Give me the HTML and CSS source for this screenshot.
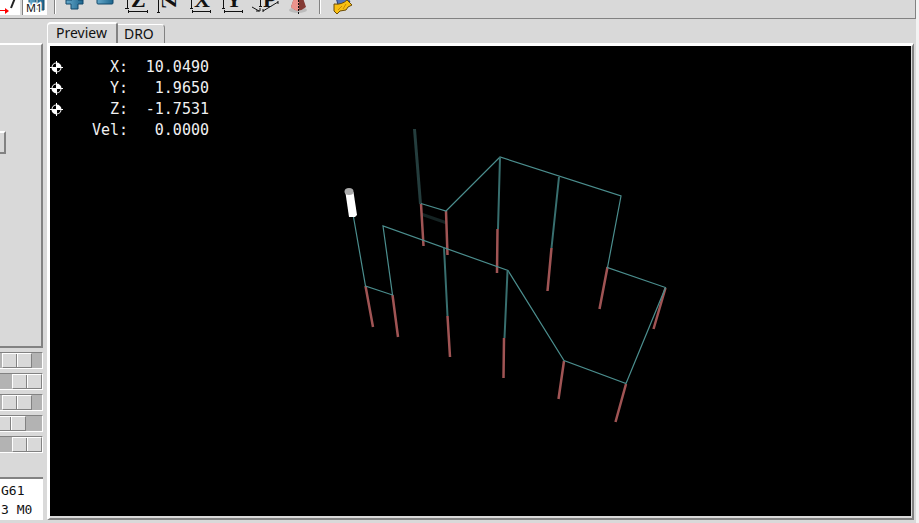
FILE: index.html
```html
<!DOCTYPE html>
<html lang="en">
<head>
<meta charset="utf-8">
<title>Preview</title>
<link rel="stylesheet" href="styles.css">
</head>
<body>
<div class="app">
  <div class="toolbar">
    <button class="tool toggle first" aria-label="Skip"><svg width="20" height="15"><path d="M0 10.500h6" stroke="#f00"/><path d="M5 8l4 3-4 3z" fill="#f00"/><path d="M15-2l-4 10" stroke="#222" stroke-width="2"/></svg></button>
    <button class="tool toggle" aria-label="Optional pause"><svg width="24" height="15"><defs><linearGradient id="b"><stop stop-color="#66a9cb"/><stop offset="1" stop-color="#1d658d"/></linearGradient></defs><path d="M6-3h7v13H6zM15-3h6v13h-6z" fill="url(#b)" stroke="#16506f"/><text x="3" y="12" class="m1">M1</text></svg></button>
    <span class="sep"></span>
    <button class="tool" aria-label="Zoom in"><svg width="31" height="18"><path d="M12-4h6v4h5v4h-5v5h-7V4H6V0h6z" transform="translate(2)" fill="url(#b)" stroke="#12496a"/></svg></button>
    <button class="tool" aria-label="Zoom out"><svg width="31" height="18"><rect x="8" y="-3" width="16" height="7" rx="1" fill="url(#b)" stroke="#12496a"/></svg></button>
    <button class="tool" aria-label="Z view"><svg width="31" height="18"><path class="axis" d="M7.500-2V8M5 8.500h4M8 11.500h19M8.500 10v3M27.500 10v3"/><text x="11" y="7" class="letter">Z</text></svg></button>
    <button class="tool" aria-label="Rotated Z view"><svg width="32" height="18"><path class="axis" d="M7.500-2v14M6 12.500h3"/><text x="11" y="-6" class="letter" transform="rotate(90 11 -6)">Z</text></svg></button>
    <button class="tool" aria-label="X view"><svg width="32" height="18"><path class="axis" d="M8.500-2V8M7 8.500h3M9 11.500h19M9.500 10v3M27.500 10v3"/><text x="11" y="7" class="letter">X</text></svg></button>
    <button class="tool" aria-label="Y view"><svg width="32" height="18"><path class="axis" d="M8.500-2V8M7 8.500h3M9 11.500h19M9.500 10v3M27.500 10v3"/><text x="11" y="7" class="letter">Y</text></svg></button>
    <button class="tool" aria-label="Perspective view"><svg width="32" height="18"><path class="axis" d="M13.500-2V6M12 6.500h3M5 7l7 4M13 8v3H9M16 11l15-9M16 9v3M31 1v3"/><text x="16" y="7" class="letter">P</text></svg></button>
    <button class="tool" aria-label="Rotate"><svg width="36" height="18"><ellipse cx="19" cy="10" rx="9" ry="3" fill="#bbb"/><path d="M16-5l-4 12q7 7 15 0L23-5z" fill="#843a34"/><path d="M16-5l-4 12q4 4 8 4V-5z" fill="#eb938c"/><path d="M19.500-3v17" stroke="#111" stroke-dasharray="2 1"/></svg></button>
    <span class="sep wide"></span>
    <button class="tool" aria-label="Clear plot"><svg width="32" height="18"><path d="M11-3h11l3 5-12 3z" fill="#5375bd" stroke="#273b73"/><path d="M9 4q8 1 13-4l5 5-4 2-2 3-6 1-3 3-3-3z" fill="#f8bf13" stroke="#6b4b05"/><path d="M13 10l4-4M18 9l3-5" stroke="#c68a08"/></svg></button>
  </div>

  <div class="main">
    <aside class="side">
      <div class="panel"><button class="stub" aria-label="Action"></button></div>
      <div class="sliders">
        <input type="range" aria-label="Feed override" min="0" max="68" value="58">
        <input type="range" aria-label="Rapid override" min="0" max="68" value="68">
        <input type="range" aria-label="Spindle override" min="0" max="68" value="58">
        <input type="range" aria-label="Jog speed" min="0" max="68" value="52">
        <input type="range" aria-label="Max velocity" min="0" max="68" value="68">
      </div>
      <textarea class="codes" aria-label="Active codes" readonly>G61
3 M0</textarea>
    </aside>

    <section class="notebook">
      <div class="tabs" role="tablist">
        <button class="tab active" role="tab" aria-selected="true">Preview</button>
        <button class="tab" role="tab" aria-selected="false">DRO</button>
      </div>
      <div class="page">
        <svg class="plot" viewBox="50 46 861 470" preserveAspectRatio="xMidYMid meet">
          <path class="faint" d="M414.500 129L420.500 204"/>
          <path class="shadow" d="M421 214L447 223"/>
          <g class="feed">
            <path d="M365.500 286L373 327M392.500 295L398 337M421 204L423.500 246M446 211L447.500 255M447.500 316L450 357M504 338L503.500 378M497.500 229L497 273M551.500 248L547.500 291M607.500 267L599.500 309M665.500 288L653.500 329M564 361L558.500 399M626 384L615.500 422"/>
          </g>
          <g class="rapid">
            <path d="M353.500 217L365.500 286L392.500 295L383 226L508 270.500L564 360.500L626 383.500L665.500 287.500L607.500 267.500L621 196L500 157L446 211L421 203.500"/>
            <path class="drop" d="M444 247.500L447.500 316M507.500 271L504.500 338M500 157L498 229M559 177L551.500 248"/>
          </g>
          <path d="M345.500 193L349 217H355L357 215L353.500 192z" fill="#fff"/>
          <ellipse cx="349" cy="191.500" rx="4.500" ry="3.500" fill="#aaa"/>
        </svg>
        <svg class="defs" width="0" height="0"><defs><symbol id="home" viewBox="0 0 13 13"><circle cx="6.500" cy="6.500" r="5" fill="#fff"/><path d="M6 6V2.500A4 4 0 0 0 2.500 6zM7 7v3.500A4 4 0 0 0 10.500 7z" fill="#000"/><path d="M6.500 0v13M0 6.500h13" stroke="#fff"/></symbol></defs></svg>
        <div class="readout">
          <svg class="home"><use href="#home"/></svg><span>X:</span><span>10.0490</span>
          <svg class="home"><use href="#home"/></svg><span>Y:</span><span>1.9650</span>
          <svg class="home"><use href="#home"/></svg><span>Z:</span><span>-1.7531</span>
          <i></i><span>Vel:</span><span>0.0000</span>
        </div>
      </div>
    </section>
  </div>
</div>
</body>
</html>
```
FILE: styles.css
```css
* { box-sizing: border-box; }
body {
  margin: 0;
  padding-right: 3px;
  height: 100vh;
  overflow: hidden;
  background: #f3f3f3;
  font: 14px/18px "Noto Sans", sans-serif;
  color: #111;
}
button { margin: 0; padding: 0; border: 0; background: none; font: inherit; color: inherit; }
.app { height: 100%; display: flex; flex-direction: column; background: #d9d9d9; }

.toolbar {
  flex: 0 0 19px;
  display: flex;
  align-items: flex-start;
  overflow: hidden;
  border-right: 1px solid #828282;
  border-bottom: 1px solid #828282;
}
.tool { flex: none; height: 18px; }
.tool svg { display: block; fill: none; }
.toggle { height: 15px; background: #fff; border-left: 1px solid #828282; }
.toggle.first { border-left: 0; margin-right: 2px; }
.sep { flex: none; width: 2px; height: 14px; margin: 0 2px 0 7px; border-left: 1px solid #828282; border-right: 1px solid #fff; }
.sep.wide { margin: 0 4px; }
.axis { stroke: #111; }
.letter { font: bold 22px "Liberation Serif", serif; fill: #111; }
.m1 { font: 11px "Noto Sans", sans-serif; fill: #111; stroke: #fff; stroke-width: 3px; paint-order: stroke; }

.main { flex: 1; min-height: 0; display: flex; gap: 4px; padding: 3px 2px 3px 0; }
.side { flex: 0 0 43px; display: flex; flex-direction: column; overflow: hidden; padding-top: 21px; }
.panel {
  flex: 1;
  padding-top: 86px;
  border-top: 2px solid #fff;
  border-right: 2px solid #828282;
  border-bottom: 2px solid #828282;
}
.stub {
  display: block;
  width: 6px;
  height: 23px;
  border: solid #828282;
  border-width: 2px 2px 2px 0;
  border-top-color: #fff;
}
.sliders { display: flex; flex-direction: column; align-items: flex-end; gap: 4px; padding: 4px 0 24px; }
.sliders input {
  appearance: none;
  flex: none;
  width: 100px;
  height: 17px;
  margin: 0;
  background: #b3b3b3;
  border: 1px solid #fff;
  border-top-color: #828282;
}
.sliders input::-webkit-slider-thumb {
  appearance: none;
  width: 30px;
  height: 15px;
  background: linear-gradient(90deg, transparent 13px, #828282 13px 14px, #fff 14px 15px, transparent 15px) #d9d9d9;
  border: 1px solid #828282;
  border-top-color: #fff;
  border-left-color: #fff;
}
.codes {
  display: block;
  width: 100%;
  height: 43px;
  margin: 0;
  padding: 2px 0 0 1px;
  border: 0;
  border-top: 2px solid #828282;
  resize: none;
  overflow: hidden;
  outline: 0;
  background: #fff;
  color: #111;
  font: 13px/19px "DejaVu Sans Mono", monospace;
  white-space: pre;
}

.notebook { flex: 1; min-width: 0; display: flex; flex-direction: column; }
.tabs { flex: 0 0 21px; display: flex; align-items: flex-end; }
.tab {
  height: 19px;
  padding: 0 10px 0 6px;
  border: 1px solid #828282;
  border-top-color: #fff;
  border-left: 0;
  border-bottom: 0;
  border-radius: 0 4px 0 0;
}
.tab.active {
  height: 21px;
  padding: 0 9px 3px 8px;
  border: solid #fff;
  border-width: 2px 2px 0 1px;
  border-right-color: #828282;
  border-radius: 4px 3px 0 0;
}
.page {
  flex: 1;
  min-height: 0;
  position: relative;
  background: #000;
  border: 3px solid #fff;
  border-right: 2px solid #828282;
  border-bottom: 2px solid #828282;
  box-shadow: inset -1px -2px #d9d9d9;
}
.plot { display: block; width: calc(100% - 1px); height: calc(100% - 2px); fill: none; }
.rapid { stroke: #4b8e8e; stroke-width: 1.2px; }
.drop { stroke-width: 2px; stroke: #386f6f; }
.feed { stroke: #a05454; stroke-width: 2.5px; }
.faint { stroke: #243d3d; stroke-width: 3px; }
.shadow { stroke: #152323; stroke-width: 3px; }
.defs { position: absolute; }
.readout {
  position: absolute;
  top: 11px;
  left: 0;
  display: grid;
  grid-template-columns: 14px 64px 81px;
  grid-auto-rows: 21px;
  align-items: center;
  text-align: right;
  color: #f0f0f0;
  font: 15px/21px "DejaVu Sans Mono", monospace;
}
.home { width: 13px; height: 13px; }
```
